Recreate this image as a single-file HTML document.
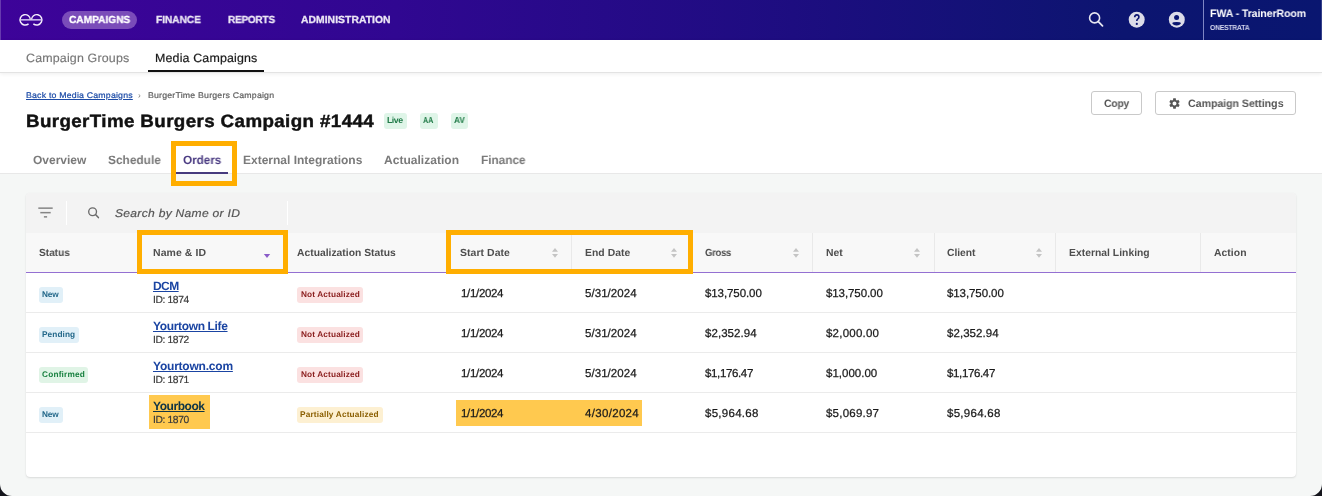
<!DOCTYPE html>
<html><head><meta charset="utf-8">
<style>
*{margin:0;padding:0;box-sizing:border-box}
html,body{width:1322px;height:496px;overflow:hidden;background:#f5f7f6;font-family:"Liberation Sans",sans-serif}
.t{position:absolute;white-space:nowrap;line-height:20px;font-family:"Liberation Sans",sans-serif;text-rendering:geometricPrecision;will-change:transform}
.a{position:absolute}
#hdr{left:0;top:0;width:1322px;height:40px;background:linear-gradient(90deg,#3d0399 0%,#300791 30%,#1d0d80 60%,#0c1570 85%,#091670 100%)}
#sub{left:0;top:40px;width:1322px;height:33px;background:#fff;border-bottom:1px solid #e3e3e3;box-shadow:0 1px 4px rgba(0,0,0,0.07)}
#ph{left:0;top:73px;width:1322px;height:101px;background:#fff;border-bottom:1px solid #e8e8e8}
.btn{position:absolute;border:1px solid #c9c9c9;border-radius:3px;background:#fff}
.badge{position:absolute;border-radius:3px;height:16px}
#card{left:25.5px;top:192.5px;width:1270.5px;height:284px;background:#fff;border-radius:4px;box-shadow:0 1px 2px rgba(0,0,0,0.11),0 0 1px rgba(0,0,0,0.07)}
#tool{left:25.5px;top:192.5px;width:1270.5px;height:40.5px;background:#f3f3f3;border-radius:4px 4px 0 0}
#thead{left:25.5px;top:233px;width:1270.5px;height:39px;background:#f8f8f8}
.vd{position:absolute;width:1px;background:#e9e9e9}
.hl{position:absolute;height:1px;background:#ebebeb}
.ob{position:absolute;border:5px solid #ffae00}
</style></head><body>
<div class="a" id="hdr"></div>
<div class="a" style="left:1203px;top:0;width:1px;height:40px;background:#7f86c4"></div>
<div class="a" style="left:62px;top:11px;width:75px;height:18px;border-radius:9px;background:#7a4cb9"></div>
<!-- logo -->
<svg class="a" style="left:14px;top:8px" width="36" height="24" viewBox="0 0 36 24">
  <g fill="none" stroke="#f4eefc" stroke-width="1.45">
    <path d="M16.4 11.85 A5.2 5.2 0 1 0 14.54 15.83"/>
    <path d="M17.5 11.85 A5.2 5.2 0 1 1 19.36 15.83"/>
  </g>
  <path d="M6 11.85 H27.9" stroke="#d6c8f2" stroke-width="1.45"/>
</svg>
<!-- search icon -->
<svg class="a" style="left:1087px;top:10px" width="20" height="20" viewBox="0 0 20 20">
  <circle cx="7.6" cy="7.9" r="5" fill="none" stroke="#e6e6f0" stroke-width="1.6"/>
  <path d="M11.3 11.6 L15.5 15.8" stroke="#e6e6f0" stroke-width="1.8" stroke-linecap="round"/>
</svg>
<!-- help icon -->
<svg class="a" style="left:1126px;top:9px" width="22" height="22" viewBox="0 0 22 22">
  <circle cx="10.7" cy="10.7" r="8" fill="#dcdce8"/>
  <path d="M8.7 8.3 Q8.7 5.9 10.8 5.9 Q12.9 5.9 12.9 8.0 Q12.9 9.2 11.8 9.9 Q10.8 10.5 10.8 12.1" fill="none" stroke="#0c1570" stroke-width="1.65"/>
  <circle cx="10.8" cy="14.9" r="1.1" fill="#0c1570"/>
</svg>
<!-- user icon -->
<svg class="a" style="left:1166px;top:9px" width="22" height="22" viewBox="0 0 22 22">
  <circle cx="10.8" cy="10.7" r="8" fill="#dcdce8"/>
  <circle cx="10.6" cy="8.4" r="2.5" fill="#0a1670"/>
  <path d="M6.2 14.1 Q6.6 12.9 10.6 12.9 Q14.6 12.9 15.0 14.1 Q14.2 16.5 10.6 16.5 Q7.0 16.5 6.2 14.1 Z" fill="#0a1670"/>
</svg>

<div class="a" id="ph"></div>
<div class="a" id="sub"></div>
<div class="a" style="left:148px;top:70px;width:116px;height:2px;background:#111"></div>
<!-- badges title -->
<div class="badge" style="left:384px;top:113px;width:23px;background:#dff5e8"></div>
<div class="badge" style="left:420px;top:113px;width:17.5px;background:#dff5e8"></div>
<div class="badge" style="left:451px;top:113px;width:17px;background:#dff5e8"></div>
<!-- buttons -->
<div class="btn" style="left:1091px;top:91px;width:51px;height:24px"></div>
<div class="btn" style="left:1155px;top:91px;width:141px;height:24px"></div>
<svg class="a" style="left:1168px;top:97px" width="13" height="13" viewBox="0 0 24 24">
  <path fill="#555" d="M19.14 12.94c.04-.3.06-.61.06-.94 0-.32-.02-.64-.07-.94l2.03-1.58c.18-.14.23-.41.12-.61l-1.92-3.32c-.12-.22-.37-.29-.59-.22l-2.39.96c-.5-.38-1.03-.7-1.62-.94l-.36-2.54c-.04-.24-.24-.41-.48-.41h-3.84c-.24 0-.43.17-.47.41l-.36 2.54c-.59.24-1.13.57-1.62.94l-2.39-.96c-.22-.08-.47 0-.59.22L2.74 8.87c-.12.21-.08.47.12.61l2.03 1.58c-.05.3-.09.63-.09.94s.02.64.07.94l-2.03 1.58c-.18.14-.23.41-.12.61l1.92 3.32c.12.22.37.29.59.22l2.39-.96c.5.38 1.03.7 1.62.94l.36 2.54c.05.24.24.41.48.41h3.84c.24 0 .44-.17.47-.41l.36-2.54c.59-.24 1.13-.56 1.62-.94l2.39.96c.22.08.47 0 .59-.22l1.92-3.32c.12-.22.07-.47-.12-.61l-2.01-1.58zM12 15.6c-1.98 0-3.6-1.62-3.6-3.6s1.62-3.6 3.6-3.6 3.6 1.62 3.6 3.6-1.62 3.6-3.6 3.6z"/>
</svg>
<!-- tab underline -->
<div class="a" style="left:176px;top:172px;width:52px;height:2px;background:#463a7e"></div>

<!-- card -->
<div class="a" id="card"></div>
<div class="a" id="tool"></div>
<svg class="a" style="left:36px;top:204px" width="20" height="16" viewBox="0 0 20 16">
  <g fill="#858585"><rect x="2.3" y="3.4" width="14.4" height="1.5"/><rect x="4.3" y="7.9" width="10.4" height="1.5"/><rect x="7.9" y="12.1" width="3.2" height="1.5"/></g>
</svg>
<div class="a" style="left:66px;top:201px;width:1px;height:24px;background:#fff"></div>
<div class="a" style="left:287px;top:201px;width:1px;height:24px;background:#fff"></div>
<svg class="a" style="left:86px;top:205px" width="16" height="16" viewBox="0 0 16 16">
  <circle cx="6.6" cy="6.7" r="3.9" fill="none" stroke="#6a6a6a" stroke-width="1.35"/>
  <path d="M9.5 9.6 L12.4 12.6" stroke="#6a6a6a" stroke-width="1.5" stroke-linecap="round"/>
</svg>
<div class="a" id="thead"></div>
<div class="vd" style="left:139px;top:233px;height:39px"></div>
<div class="vd" style="left:283px;top:233px;height:39px"></div>
<div class="vd" style="left:447px;top:233px;height:39px"></div>
<div class="vd" style="left:571px;top:233px;height:39px"></div>
<div class="vd" style="left:690px;top:233px;height:39px"></div>
<div class="vd" style="left:812px;top:233px;height:39px"></div>
<div class="vd" style="left:934px;top:233px;height:39px"></div>
<div class="vd" style="left:1055px;top:233px;height:39px"></div>
<div class="vd" style="left:1200px;top:233px;height:39px"></div>
<div class="a" style="left:25.5px;top:272px;width:1270.5px;height:1px;background:#9470d2"></div>
<!-- sort icons -->
<svg class="a" style="left:551px;top:247px" width="8" height="12" viewBox="0 0 8 12"><path d="M1 4.8 L4 1 L7 4.8Z M1 6.9 L4 10.7 L7 6.9Z" fill="#c4c4c4"/></svg>
<svg class="a" style="left:670px;top:247px" width="8" height="12" viewBox="0 0 8 12"><path d="M1 4.8 L4 1 L7 4.8Z M1 6.9 L4 10.7 L7 6.9Z" fill="#c4c4c4"/></svg>
<svg class="a" style="left:792px;top:247px" width="8" height="12" viewBox="0 0 8 12"><path d="M1 4.8 L4 1 L7 4.8Z M1 6.9 L4 10.7 L7 6.9Z" fill="#c4c4c4"/></svg>
<svg class="a" style="left:913px;top:247px" width="8" height="12" viewBox="0 0 8 12"><path d="M1 4.8 L4 1 L7 4.8Z M1 6.9 L4 10.7 L7 6.9Z" fill="#c4c4c4"/></svg>
<svg class="a" style="left:1035px;top:247px" width="8" height="12" viewBox="0 0 8 12"><path d="M1 4.8 L4 1 L7 4.8Z M1 6.9 L4 10.7 L7 6.9Z" fill="#c4c4c4"/></svg>
<svg class="a" style="left:263px;top:253px" width="8" height="6" viewBox="0 0 8 6"><path d="M0.8 0.9 L7.2 0.9 L4 5Z" fill="#8a5cc8"/></svg>
<!-- row lines -->
<div class="hl" style="left:25.5px;top:312px;width:1270.5px"></div>
<div class="hl" style="left:25.5px;top:352px;width:1270.5px"></div>
<div class="hl" style="left:25.5px;top:392px;width:1270.5px"></div>
<div class="hl" style="left:25.5px;top:432px;width:1270.5px"></div>
<!-- row badges -->
<div class="badge" style="left:39px;top:287.3px;width:23.7px;height:15.4px;background:#e1f0f8"></div>
<div class="badge" style="left:39px;top:327.3px;width:39.8px;height:15.4px;background:#e1f0f8"></div>
<div class="badge" style="left:39px;top:367.3px;width:48.8px;height:15.4px;background:#e0f4e6"></div>
<div class="badge" style="left:39px;top:407.3px;width:23.7px;height:15.4px;background:#e1f0f8"></div>
<div class="badge" style="left:297.3px;top:287.3px;width:66px;height:15.4px;background:#fbe1e1"></div>
<div class="badge" style="left:297.3px;top:327.3px;width:66px;height:15.4px;background:#fbe1e1"></div>
<div class="badge" style="left:297.3px;top:367.3px;width:66px;height:15.4px;background:#fbe1e1"></div>
<div class="badge" style="left:297.3px;top:407.3px;width:85.6px;height:15.4px;background:#fdf0d2"></div>
<!-- highlights -->
<div class="a" style="left:149px;top:395px;width:61px;height:34px;background:#ffc94f"></div>
<div class="a" style="left:456px;top:400px;width:186px;height:26px;background:#ffc94f"></div>
<div class="t" style="left:68.80px;top:11.00px;font-size:10.25px;font-weight:700;color:#ffffff;letter-spacing:-0.037px;transform:scaleX(0.9928);transform-origin:0.00px 0;-webkit-text-stroke:0.3px #fff;">CAMPAIGNS</div>
<div class="t" style="left:156.30px;top:11.00px;font-size:10.25px;font-weight:700;color:#ebe6f5;letter-spacing:-0.048px;transform:scaleX(0.9906);transform-origin:0.00px 0;-webkit-text-stroke:0.3px #ebe6f5;">FINANCE</div>
<div class="t" style="left:227.50px;top:11.00px;font-size:10.25px;font-weight:700;color:#ebe6f5;letter-spacing:-0.170px;transform:scaleX(0.9694);transform-origin:0.00px 0;-webkit-text-stroke:0.3px #ebe6f5;">REPORTS</div>
<div class="t" style="left:300.50px;top:11.00px;font-size:10.25px;font-weight:700;color:#ebe6f5;letter-spacing:0.044px;transform:scaleX(1.0098);transform-origin:0.00px 0;-webkit-text-stroke:0.3px #ebe6f5;">ADMINISTRATION</div>
<div class="t" style="left:1210.40px;top:4.00px;font-size:10.75px;font-weight:700;color:#ffffff;letter-spacing:-0.080px;transform:scaleX(0.9806);transform-origin:0.00px 0;">FWA - TrainerRoom</div>
<div class="t" style="left:1210.40px;top:18.00px;font-size:7.25px;font-weight:700;color:#d8daf0;letter-spacing:-0.232px;transform:scaleX(0.9385);transform-origin:0.00px 0;">ONESTRATA</div>
<div class="t" style="left:25.60px;top:48.00px;font-size:12.0px;font-weight:400;color:#777777;letter-spacing:0.163px;transform:scaleX(1.0354);transform-origin:0.00px 0;-webkit-text-stroke-width:0.15px;">Campaign Groups</div>
<div class="t" style="left:155.10px;top:48.00px;font-size:12.0px;font-weight:400;color:#1a1a1a;letter-spacing:0.157px;transform:scaleX(1.0343);transform-origin:0.00px 0;-webkit-text-stroke-width:0.2px;">Media Campaigns</div>
<div class="t" style="left:25.50px;top:86.00px;font-size:8.25px;font-weight:400;color:#1b4aa6;letter-spacing:0.182px;transform:scaleX(1.0631);transform-origin:0.00px 0;text-decoration:underline;text-underline-offset:1px;-webkit-text-stroke-width:0.2px;">Back to Media Campaigns</div>
<div class="t" style="left:138.00px;top:86.00px;font-size:8.25px;font-weight:400;color:#777777;letter-spacing:0.000px;">›</div>
<div class="t" style="left:148.20px;top:86.00px;font-size:8.25px;font-weight:400;color:#5e5e5e;letter-spacing:0.182px;transform:scaleX(1.0629);transform-origin:0.00px 0;-webkit-text-stroke-width:0.2px;">BurgerTime Burgers Campaign</div>
<div class="t" style="left:25.85px;top:111.00px;font-size:17.75px;font-weight:700;color:#111111;letter-spacing:0.370px;transform:scaleX(1.0566);transform-origin:1.00px 0;-webkit-text-stroke:0.45px #111;">BurgerTime Burgers Campaign #1444</div>
<div class="t" style="left:387.00px;top:110.00px;font-size:8.75px;font-weight:700;color:#207a48;letter-spacing:-0.481px;">Live</div>
<div class="t" style="left:423.30px;top:110.00px;font-size:8.75px;font-weight:700;color:#1f7a46;letter-spacing:0.000px;transform:scaleX(0.8184);transform-origin:0.00px 0;">AA</div>
<div class="t" style="left:453.90px;top:110.00px;font-size:8.75px;font-weight:700;color:#1f7a46;letter-spacing:0.000px;transform:scaleX(0.9341);transform-origin:0.00px 0;">AV</div>
<div class="t" style="left:32.70px;top:150.00px;font-size:12.0px;font-weight:700;color:#7a7a7a;letter-spacing:-0.008px;">Overview</div>
<div class="t" style="left:107.50px;top:150.00px;font-size:12.0px;font-weight:700;color:#7a7a7a;letter-spacing:-0.033px;transform:scaleX(0.9935);transform-origin:0.00px 0;">Schedule</div>
<div class="t" style="left:182.70px;top:150.00px;font-size:12.0px;font-weight:700;color:#4a3b82;letter-spacing:-0.087px;transform:scaleX(0.9836);transform-origin:0.00px 0;">Orders</div>
<div class="t" style="left:243.00px;top:150.00px;font-size:12.0px;font-weight:700;color:#7a7a7a;letter-spacing:0.000px;">External Integrations</div>
<div class="t" style="left:384.00px;top:150.00px;font-size:12.0px;font-weight:700;color:#7a7a7a;letter-spacing:0.012px;transform:scaleX(1.0029);transform-origin:0.00px 0;">Actualization</div>
<div class="t" style="left:480.80px;top:150.00px;font-size:12.0px;font-weight:700;color:#7a7a7a;letter-spacing:-0.052px;transform:scaleX(0.9898);transform-origin:0.00px 0;">Finance</div>
<div class="t" style="left:1103.90px;top:94.00px;font-size:10.75px;font-weight:700;color:#555555;letter-spacing:-0.217px;transform:scaleX(0.9640);transform-origin:0.00px 0;">Copy</div>
<div class="t" style="left:1187.50px;top:94.00px;font-size:10.75px;font-weight:700;color:#555555;letter-spacing:-0.047px;transform:scaleX(0.9884);transform-origin:0.00px 0;">Campaign Settings</div>
<div class="t" style="left:114.80px;top:204.00px;font-size:11.25px;font-weight:400;color:#555555;letter-spacing:0.277px;transform:scaleX(1.0719);transform-origin:0.00px 0;font-style:italic;-webkit-text-stroke-width:0.2px;">Search by Name or ID</div>
<div class="t" style="left:39.00px;top:244.00px;font-size:10.25px;font-weight:700;color:#4e4e4e;letter-spacing:-0.050px;transform:scaleX(0.9881);transform-origin:0.00px 0;">Status</div>
<div class="t" style="left:152.80px;top:244.00px;font-size:10.25px;font-weight:700;color:#4e4e4e;letter-spacing:0.086px;transform:scaleX(1.0204);transform-origin:0.00px 0;">Name &amp; ID</div>
<div class="t" style="left:297.00px;top:244.00px;font-size:10.25px;font-weight:700;color:#4e4e4e;letter-spacing:0.016px;transform:scaleX(1.0045);transform-origin:0.00px 0;">Actualization Status</div>
<div class="t" style="left:460.30px;top:244.00px;font-size:10.25px;font-weight:700;color:#4e4e4e;letter-spacing:0.065px;transform:scaleX(1.0182);transform-origin:0.00px 0;">Start Date</div>
<div class="t" style="left:584.80px;top:244.00px;font-size:10.25px;font-weight:700;color:#4e4e4e;letter-spacing:0.050px;transform:scaleX(1.0117);transform-origin:0.00px 0;">End Date</div>
<div class="t" style="left:704.60px;top:244.00px;font-size:10.25px;font-weight:700;color:#4e4e4e;letter-spacing:-0.344px;transform:scaleX(0.9318);transform-origin:0.00px 0;">Gross</div>
<div class="t" style="left:826.00px;top:244.00px;font-size:10.25px;font-weight:700;color:#4e4e4e;letter-spacing:0.059px;transform:scaleX(1.0104);transform-origin:0.00px 0;">Net</div>
<div class="t" style="left:947.40px;top:244.00px;font-size:10.25px;font-weight:700;color:#4e4e4e;letter-spacing:-0.005px;">Client</div>
<div class="t" style="left:1069.00px;top:244.00px;font-size:10.25px;font-weight:700;color:#4e4e4e;letter-spacing:0.025px;transform:scaleX(1.0070);transform-origin:0.00px 0;">External Linking</div>
<div class="t" style="left:1214.00px;top:244.00px;font-size:10.25px;font-weight:700;color:#4e4e4e;letter-spacing:0.046px;transform:scaleX(1.0109);transform-origin:0.00px 0;">Action</div>
<div class="t" style="left:152.80px;top:276.00px;font-size:12.0px;font-weight:700;color:#1a44a2;letter-spacing:-0.566px;text-decoration:underline;text-decoration-thickness:1px;text-underline-offset:0.5px;">DCM</div>
<div class="t" style="left:152.80px;top:291.00px;font-size:10.25px;font-weight:400;color:#3a3a3a;letter-spacing:-0.364px;-webkit-text-stroke-width:0.2px;">ID: 1874</div>
<div class="t" style="left:42.30px;top:285.00px;font-size:8.25px;font-weight:700;color:#23688a;letter-spacing:-0.123px;">New</div>
<div class="t" style="left:300.50px;top:285.00px;font-size:8.25px;font-weight:700;color:#8a1c1c;letter-spacing:0.134px;">Not Actualized</div>
<div class="t" style="left:460.60px;top:284.00px;font-size:11.5px;font-weight:400;color:#1a1a1a;letter-spacing:-0.324px;-webkit-text-stroke-width:0.25px;">1/1/2024</div>
<div class="t" style="left:584.60px;top:284.00px;font-size:11.5px;font-weight:400;color:#1a1a1a;letter-spacing:0.054px;-webkit-text-stroke-width:0.25px;">5/31/2024</div>
<div class="t" style="left:704.60px;top:284.00px;font-size:11.5px;font-weight:400;color:#1a1a1a;letter-spacing:-0.084px;-webkit-text-stroke-width:0.25px;">$13,750.00</div>
<div class="t" style="left:826.00px;top:284.00px;font-size:11.5px;font-weight:400;color:#1a1a1a;letter-spacing:-0.084px;-webkit-text-stroke-width:0.25px;">$13,750.00</div>
<div class="t" style="left:947.40px;top:284.00px;font-size:11.5px;font-weight:400;color:#1a1a1a;letter-spacing:-0.084px;-webkit-text-stroke-width:0.25px;">$13,750.00</div>
<div class="t" style="left:152.80px;top:316.00px;font-size:12.0px;font-weight:700;color:#1a44a2;letter-spacing:-0.352px;text-decoration:underline;text-decoration-thickness:1px;text-underline-offset:0.5px;">Yourtown Life</div>
<div class="t" style="left:152.80px;top:331.00px;font-size:10.25px;font-weight:400;color:#3a3a3a;letter-spacing:-0.364px;-webkit-text-stroke-width:0.2px;">ID: 1872</div>
<div class="t" style="left:42.00px;top:325.00px;font-size:8.25px;font-weight:700;color:#23688a;letter-spacing:0.083px;">Pending</div>
<div class="t" style="left:300.50px;top:325.00px;font-size:8.25px;font-weight:700;color:#8a1c1c;letter-spacing:0.134px;">Not Actualized</div>
<div class="t" style="left:460.60px;top:324.00px;font-size:11.5px;font-weight:400;color:#1a1a1a;letter-spacing:-0.324px;-webkit-text-stroke-width:0.25px;">1/1/2024</div>
<div class="t" style="left:584.60px;top:324.00px;font-size:11.5px;font-weight:400;color:#1a1a1a;letter-spacing:0.054px;-webkit-text-stroke-width:0.25px;">5/31/2024</div>
<div class="t" style="left:704.60px;top:324.00px;font-size:11.5px;font-weight:400;color:#1a1a1a;letter-spacing:0.054px;-webkit-text-stroke-width:0.25px;">$2,352.94</div>
<div class="t" style="left:826.00px;top:324.00px;font-size:11.5px;font-weight:400;color:#1a1a1a;letter-spacing:0.229px;-webkit-text-stroke-width:0.25px;">$2,000.00</div>
<div class="t" style="left:947.40px;top:324.00px;font-size:11.5px;font-weight:400;color:#1a1a1a;letter-spacing:0.054px;-webkit-text-stroke-width:0.25px;">$2,352.94</div>
<div class="t" style="left:152.80px;top:356.00px;font-size:12.0px;font-weight:700;color:#1a44a2;letter-spacing:-0.216px;text-decoration:underline;text-decoration-thickness:1px;text-underline-offset:0.5px;">Yourtown.com</div>
<div class="t" style="left:152.80px;top:371.00px;font-size:10.25px;font-weight:400;color:#3a3a3a;letter-spacing:-0.364px;-webkit-text-stroke-width:0.2px;">ID: 1871</div>
<div class="t" style="left:42.20px;top:365.00px;font-size:8.25px;font-weight:700;color:#17803f;letter-spacing:0.199px;">Confirmed</div>
<div class="t" style="left:300.50px;top:365.00px;font-size:8.25px;font-weight:700;color:#8a1c1c;letter-spacing:0.134px;">Not Actualized</div>
<div class="t" style="left:460.60px;top:364.00px;font-size:11.5px;font-weight:400;color:#1a1a1a;letter-spacing:-0.324px;-webkit-text-stroke-width:0.25px;">1/1/2024</div>
<div class="t" style="left:584.60px;top:364.00px;font-size:11.5px;font-weight:400;color:#1a1a1a;letter-spacing:0.054px;-webkit-text-stroke-width:0.25px;">5/31/2024</div>
<div class="t" style="left:704.60px;top:364.00px;font-size:11.5px;font-weight:400;color:#1a1a1a;letter-spacing:-0.358px;-webkit-text-stroke-width:0.25px;">$1,176.47</div>
<div class="t" style="left:826.00px;top:364.00px;font-size:11.5px;font-weight:400;color:#1a1a1a;letter-spacing:0.004px;-webkit-text-stroke-width:0.25px;">$1,000.00</div>
<div class="t" style="left:947.40px;top:364.00px;font-size:11.5px;font-weight:400;color:#1a1a1a;letter-spacing:-0.358px;-webkit-text-stroke-width:0.25px;">$1,176.47</div>
<div class="t" style="left:152.80px;top:396.00px;font-size:12.0px;font-weight:700;color:#0f3446;letter-spacing:-0.448px;text-decoration:underline;text-decoration-thickness:1px;text-underline-offset:0.5px;">Yourbook</div>
<div class="t" style="left:152.80px;top:411.00px;font-size:10.25px;font-weight:400;color:#3a3a3a;letter-spacing:-0.364px;-webkit-text-stroke-width:0.2px;">ID: 1870</div>
<div class="t" style="left:42.30px;top:405.00px;font-size:8.25px;font-weight:700;color:#23688a;letter-spacing:-0.123px;">New</div>
<div class="t" style="left:300.00px;top:405.00px;font-size:8.25px;font-weight:700;color:#8a5e00;letter-spacing:0.168px;">Partially Actualized</div>
<div class="t" style="left:460.60px;top:404.00px;font-size:11.5px;font-weight:400;color:#1a1a1a;letter-spacing:-0.324px;-webkit-text-stroke-width:0.25px;">1/1/2024</div>
<div class="t" style="left:584.60px;top:404.00px;font-size:11.5px;font-weight:400;color:#1a1a1a;letter-spacing:0.317px;-webkit-text-stroke-width:0.25px;">4/30/2024</div>
<div class="t" style="left:704.60px;top:404.00px;font-size:11.5px;font-weight:400;color:#1a1a1a;letter-spacing:0.279px;-webkit-text-stroke-width:0.25px;">$5,964.68</div>
<div class="t" style="left:826.00px;top:404.00px;font-size:11.5px;font-weight:400;color:#1a1a1a;letter-spacing:0.229px;-webkit-text-stroke-width:0.25px;">$5,069.97</div>
<div class="t" style="left:947.40px;top:404.00px;font-size:11.5px;font-weight:400;color:#1a1a1a;letter-spacing:0.279px;-webkit-text-stroke-width:0.25px;">$5,964.68</div>
<!-- orange boxes -->
<div class="ob" style="left:171px;top:141px;width:66px;height:45px"></div>
<div class="ob" style="left:137px;top:230px;width:151px;height:44px"></div>
<div class="ob" style="left:446px;top:230px;width:247px;height:44px"></div>
<!-- window edges -->
<div class="a" style="left:0;top:0;width:1px;height:40px;background:rgba(255,255,255,0.22)"></div>
<div class="a" style="left:1321px;top:0;width:1px;height:40px;background:rgba(255,255,255,0.18)"></div>
<!-- window corners -->
<svg class="a" style="left:0;top:484px" width="12" height="12" viewBox="0 0 12 12"><path d="M0 0 A12 12 0 0 0 12 12 L0 12Z" fill="#15151c"/></svg>
<svg class="a" style="left:1310px;top:484px" width="12" height="12" viewBox="0 0 12 12"><path d="M12 0 A12 12 0 0 1 0 12 L12 12Z" fill="#15151c"/></svg>
</body></html>
